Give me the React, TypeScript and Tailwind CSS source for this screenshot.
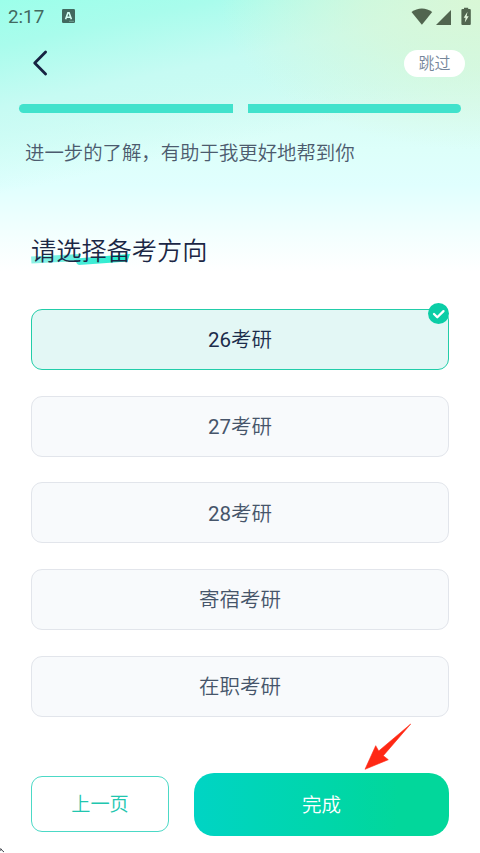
import { useState } from "react";
import clsx from "clsx";

const OPTIONS = [
  { year: "26", name: "考研" },
  { year: "27", name: "考研" },
  { year: "28", name: "考研" },
  { year: "", name: "寄宿考研" },
  { year: "", name: "在职考研" },
];

function StatusBar() {
  return (
    <div className="flex h-[33px] items-center pl-2 text-[#42695f]">
      <span className="w-[54px] pt-[2px] text-[18.8px] font-normal leading-none">2:17</span>
      <svg width="13" height="14" viewBox="0 0 13 14" className="-mt-px">
        <rect width="13" height="14" rx="1.2" fill="currentColor" />
        <path d="M3.6 10.2 5.9 3.8h1.2l2.3 6.4M4.4 8.2h4" fill="none" stroke="#d5fff4" strokeWidth="1.6" />
        <path d="M7 12.3h5" stroke="#8fc7b8" strokeWidth="0.6" />
      </svg>
      <svg width="62" height="20" viewBox="0 0 62 20" className="ml-auto mr-[7px] text-[#51654f]" fill="currentColor">
        <path d="M0.5 5C6.6 0.3 15.2 0.3 21.2 5L10.9 17.8Z" />
        <path d="M40 3v15H25Z" />
        <path d="M53 .7h4.2v1.4h1.6q1 0 1 1v13.9q0 1-1 1h-7.4q-1 0-1-1V3.1q0-1 1-1H53Z" />
        <path d="M56.5 4.8 52.7 10.7h1.9l-.8 4.8 3.9-6.3h-2.1Z" fill="#e4f8df" />
      </svg>
    </div>
  );
}

function Header() {
  return (
    <header className="flex h-[60px] items-center justify-between pl-8 pr-[15px]">
      <button aria-label="返回" className="text-[#172342]">
        <svg width="16" height="26" viewBox="0 0 16 26" fill="none" stroke="currentColor" strokeWidth="2.8" strokeLinecap="round" strokeLinejoin="round">
          <path d="M13.6 2 2.7 13l10.9 11" />
        </svg>
      </button>
      <button className="h-[27px] w-[61px] rounded-full bg-white text-[16px] leading-[27px] text-[#76869a]">跳过</button>
    </header>
  );
}

type OptionCardProps = {
  year: string;
  name: string;
  selected: boolean;
  onClick: () => void;
};

function OptionCard({ year, name, selected, onClick }: OptionCardProps) {
  return (
    <button
      onClick={onClick}
      className={clsx(
        "relative h-[61px] w-full rounded-[11px] border-[1.5px] pt-[2px] text-[20.5px]",
        selected ? "border-[#22cda9] bg-[#e3f7f5] text-[#1c2c4b]" : "border-[#e2e5eb] bg-[#f8fafc] text-[#46556a]"
      )}
    >
      {year && <span className="font-normal">{year}</span>}
      {name}
      {selected && (
        <svg width="21" height="21" viewBox="0 0 21 21" className="absolute -right-px -top-[7px]">
          <circle cx="10.5" cy="10.5" r="10.5" fill="#0bcda6" />
          <path d="m6 11 3.3 3.3 6.2-6.2" fill="none" stroke="white" strokeWidth="2.3" strokeLinecap="round" strokeLinejoin="round" />
        </svg>
      )}
    </button>
  );
}

export default function App() {
  const [selected, setSelected] = useState(0);

  return (
    <div className="relative h-[853px] w-[480px] overflow-hidden bg-white bg-[radial-gradient(ellipse_260px_150px_at_100%_0%,#d9f7d6_0%,#d9f7d6b0_45%,#d9f7d600_100%),linear-gradient(168deg,#9cffea_0px,#a9fcec_45px,#c6fbf3_105px,#d9fcf700_190px),linear-gradient(180deg,#c0faf1_0px,#d7fcf5_105px,#ddfffa_150px,#e0fffe_185px,#f2fffe_232px,#ffffff_272px)] font-['Roboto','Noto_Sans_CJK_SC',sans-serif] font-[350]">
      <StatusBar />
      <Header />

      <div className="flex gap-[15px] px-[19px] pt-[11px]">
        <div className="h-[9px] flex-1 rounded-l-full bg-[#41e2cc]" />
        <div className="h-[9px] flex-1 rounded-r-full bg-[#41e2cc]" />
      </div>

      <p className="mt-[26px] pl-[25px] text-[19.4px] leading-[30px] text-[#4c5b6e]">
        进一步的了解，有助于我更好地帮到你
      </p>

      <main className="px-[31px] pt-[64px]">
        <h1 className="relative h-[38px] text-[25.2px] font-[350] leading-[38px] text-[#1b2745]">
          <svg width="102" height="13" viewBox="0 0 102 13" className="absolute left-0 top-[20px]">
            <defs>
              <linearGradient id="stroke-a">
                <stop stopColor="#8ef2e6" />
                <stop offset="1" stopColor="#5eeede" />
              </linearGradient>
              <linearGradient id="stroke-b">
                <stop stopColor="#4becda" />
                <stop offset="1" stopColor="#20edcb" />
              </linearGradient>
            </defs>
            <path d="M0 3.5 50 1 48 8 0.5 10.5Z" fill="url(#stroke-a)" />
            <path d="M45 5.5 99 1 96.5 8.5 48 12Q44.5 11 45 5.5Z" fill="url(#stroke-b)" />
          </svg>
          <span className="relative">请选择备考方向</span>
        </h1>

        <div className="mt-[38px] flex flex-col gap-[25.7px]">
          {OPTIONS.map((option, i) => (
            <OptionCard
              key={option.year + option.name}
              year={option.year}
              name={option.name}
              selected={i === selected}
              onClick={() => setSelected(i)}
            />
          ))}
        </div>

        <div className="mt-[56.2px] flex items-center gap-[25px]">
          <button className="h-[56px] w-[138px] rounded-[11px] border border-[#4cd9c6] bg-white pt-[2px] text-[19.2px] text-[#21c6af]">
            上一页
          </button>
          <button className="h-[63px] flex-1 rounded-[20px] bg-linear-to-r from-[#00d4c4] to-[#02d79b] to-80% pt-[2px] text-[19.5px] text-white">
            完成
          </button>
        </div>
      </main>

      {/* pointer towards the submit button */}
      <svg width="48" height="48" viewBox="0 0 48 48" className="absolute left-[364px] top-[723px]">
        <path d="M46.7 1 14.7 28 11.7 22.7 1 46.3 24.3 36.7 19.3 32.7Z" fill="#ff2814" stroke="#ff2814" strokeWidth="0.6" />
      </svg>

      <svg width="5" height="6" viewBox="0 0 5 6" className="absolute bottom-0 left-0">
        <path d="M0 1.5 4 5M0 3.5 2 2" stroke="#40444c" strokeWidth="1" fill="none" />
      </svg>
    </div>
  );
}
